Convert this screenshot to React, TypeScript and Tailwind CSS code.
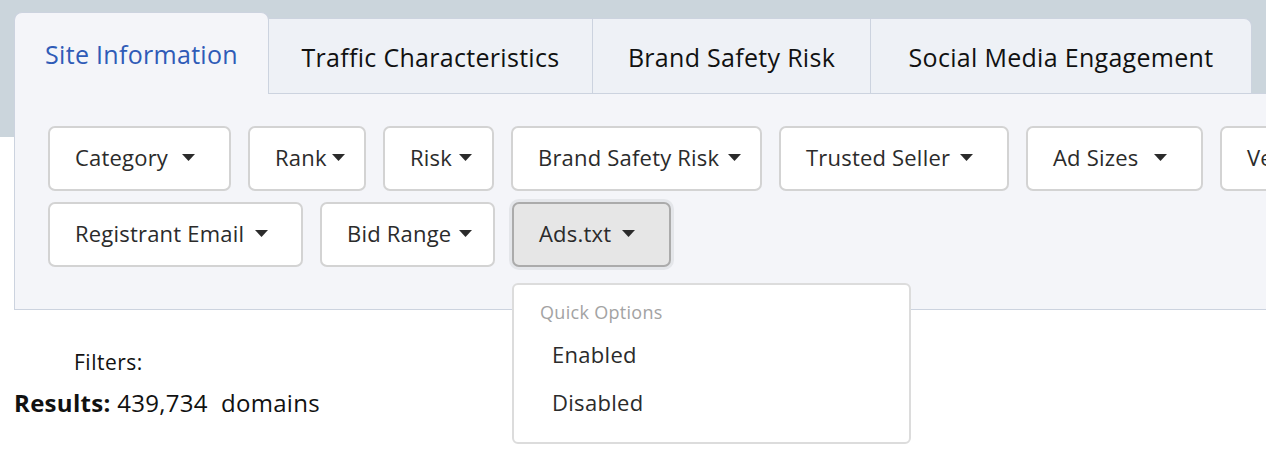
import { useState } from "react";

const Caret = () => (
  <svg width="13" height="7" viewBox="0 0 13 7" className="shrink-0">
    <path d="M0 0h13L6.5 7z" fill="#2b2b2b" />
  </svg>
);

type Filter = { label: string; w: string; pr: string };

const rowOne: Filter[] = [
  { label: "Category", w: "w-[183px]", pr: "pr-[34px]" },
  { label: "Rank", w: "w-[118px]", pr: "pr-[19px]" },
  { label: "Risk", w: "w-[111px]", pr: "pr-[20px]" },
  { label: "Brand Safety Risk", w: "w-[251px]", pr: "pr-[19px]" },
  { label: "Trusted Seller", w: "w-[230px]", pr: "pr-[34px]" },
  { label: "Ad Sizes", w: "w-[177px]", pr: "pr-[34px]" },
  { label: "Verticals", w: "w-[180px]", pr: "pr-[34px]" },
];

const rowTwo: Filter[] = [
  { label: "Registrant Email", w: "w-[255px]", pr: "pr-[33px]" },
  { label: "Bid Range", w: "w-[175px]", pr: "pr-[21px]" },
];

const FilterButton = ({ label, w, pr }: Filter) => (
  <button
    className={`flex h-[65px] shrink-0 items-center justify-between rounded-[7px] border-2 border-[#d3d3d3] bg-white pb-[2px] pl-[25px] text-[22px] tracking-[0.2px] text-[#2b2b2b] ${w} ${pr}`}
  >
    <span>{label}</span>
    <Caret />
  </button>
);

const tabs = [
  { label: "Traffic Characteristics", w: "w-[324px]" },
  { label: "Brand Safety Risk", w: "w-[278px]" },
  { label: "Social Media Engagement", w: "w-[381px]" },
];

const App = () => {
  const [open] = useState(true);

  return (
    <div className="min-h-screen overflow-hidden bg-[linear-gradient(to_bottom,#cbd5dc_137px,#ffffff_137px)] font-['Open_Sans',sans-serif] text-[#1f1f1f]">
      <div className="pl-[14px] pt-[12px]">
        {/* Abas */}
        <div className="flex items-end">
          <div className="relative z-10 -mb-px flex h-[82px] w-[255px] items-center justify-center rounded-t-[8px] border border-b-0 border-[#ccd3df] bg-[#f4f5f9] pt-[2px] text-[25px] tracking-[0.3px] text-[#2f5bb7]">
            Site Information
          </div>
          {tabs.map((tab, i) => (
            <div
              key={tab.label}
              className={`flex h-[75px] items-center justify-center border-t border-r border-[#ccd3df] bg-[#eef1f6] pt-[3px] text-[25px] tracking-[0.3px] text-[#111] ${tab.w} ${
                i === tabs.length - 1 ? "rounded-tr-[8px]" : ""
              }`}
            >
              {tab.label}
            </div>
          ))}
        </div>

        {/* Painel de filtros */}
        <div className="flex w-[1400px] flex-col gap-[11px] border border-[#ccd3df] bg-[#f4f5f9] pb-[42px] pl-[33px] pt-[32px]">
          <div className="flex gap-[17px]">
            {rowOne.map((f) => (
              <FilterButton key={f.label} {...f} />
            ))}
          </div>
          <div className="flex gap-[17px]">
            {rowTwo.map((f) => (
              <FilterButton key={f.label} {...f} />
            ))}
            <div className="relative">
              <button className="flex h-[65px] w-[159px] items-center justify-between rounded-[7px] border-2 border-[#ababab] bg-[#e6e6e6] pb-[2px] pl-[25px] pr-[34px] text-[22px] tracking-[0.2px] text-[#2b2b2b] shadow-[0_0_0_3px_#e4e6ea]">
                <span>Ads.txt</span>
                <Caret />
              </button>
              {open && (
                <div className="absolute left-0 top-full z-20 mt-[16px] flex w-[399px] flex-col rounded-[6px] border-2 border-[#dcdcdc] bg-white pb-[26px] pt-[15px]">
                  <p className="pl-[26px] text-[18px] leading-[24px] tracking-[0.3px] text-[#a3a3a3]">
                    Quick Options
                  </p>
                  <p className="mt-[16px] pl-[38px] text-[22px] leading-[28px] tracking-[0.3px] text-[#2b2b2b]">
                    Enabled
                  </p>
                  <p className="mt-[20px] pl-[38px] text-[22px] leading-[28px] tracking-[0.3px] text-[#2b2b2b]">
                    Disabled
                  </p>
                </div>
              )}
            </div>
          </div>
        </div>
      </div>

      {/* Resultados */}
      <div className="pt-[38px]">
        <p className="pl-[74px] text-[21px] leading-[28px] tracking-[0.5px] text-[#111]">Filters:</p>
        <p className="mt-[12px] pl-[14px] text-[24px] leading-[30px] tracking-[0.3px] text-[#111]">
          <span className="font-bold">Results:</span> 439,734&nbsp; domains
        </p>
      </div>
    </div>
  );
};

export default App;
